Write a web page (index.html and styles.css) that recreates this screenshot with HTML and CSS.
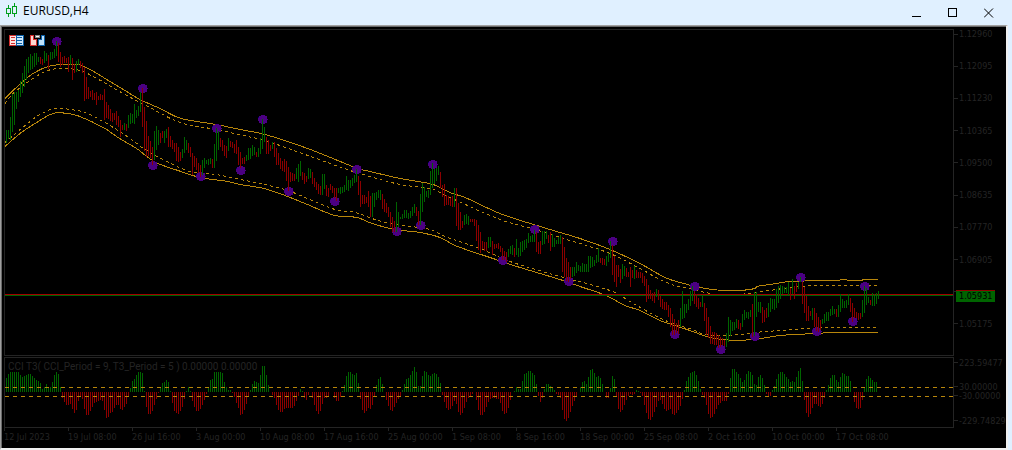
FILE: index.html
```html
<!DOCTYPE html>
<html lang="en">
<head>
<meta charset="utf-8">
<title>EURUSD,H4</title>
<link rel="stylesheet" href="styles.css">
</head>
<body>
<header class="titlebar">
  <svg class="logo" width="14" height="16" viewBox="0 0 14 16" aria-hidden="true">
    <path d="M2.5 2v3M2.5 11v3M.5 5.5h4v5h-4zM8.500 0v3M8.500 11v3M6.500 3.500h4v7h-4z"/>
  </svg>
  <h1 class="title">EURUSD,H4</h1>
  <div class="controls">
    <button class="control" aria-label="Minimize"><svg width="10" height="10" viewBox="0 0 10 10"><path d="M0 8.500h9"/></svg></button>
    <button class="control" aria-label="Maximize"><svg width="10" height="10" viewBox="0 0 10 10"><path d="M.5 .5h8v8h-8z"/></svg></button>
    <button class="control" aria-label="Close"><svg class="smooth" width="10" height="10" viewBox="0 0 10 10"><path d="M0 .5l9 9M9 .5l-9 9"/></svg></button>
  </div>
</header>
<main class="frame">
  <section class="pane price">
    <svg class="plot" id="price" viewBox="5 30 948 325" preserveAspectRatio="none" role="img" aria-label="EURUSD price chart">
      <g id="bands"></g>
      <g id="dots"></g>
      <path class="ask" d="M5 294.500H953"/>
      <path class="bid" d="M5 295.500H953"/>
      <path class="up" id="price-up"/>
      <path class="down" id="price-down"/>
    </svg>
    <div class="tools">
      <button class="tool" aria-label="Market depth">
        <svg width="15" height="11" viewBox="0 0 15 11"><path fill="#d32f2f" d="M0 0h8v11H0z"/><path fill="#0b5fa5" d="M7 0h8v11H7z"/><path fill="#ffe3df" d="M1 1h6v9H1z"/><path fill="#cfe8fb" d="M8 1h6v9H8z"/><path fill="#d32f2f" d="M2 2h4v1H2zM2 5h4v1H2zM2 8h4v1H2z"/><path fill="#0b5fa5" d="M8 2h5v1H8zM8 5h5v1H8zM8 8h5v1H8z"/></svg>
      </button>
      <button class="tool" aria-label="One click trading">
        <svg width="15" height="11" viewBox="0 0 15 11"><path fill="#d32f2f" d="M0 0h4v4h3v7H0z"/><path fill="#ffd6d0" d="M1 1h2v4h3v5H1z"/><path fill="#0b5fa5" d="M11 0h4v11H8V4h3z"/><path fill="#bfe2fb" d="M12 1h2v9H9V5h3z"/><path fill="#888" d="M5 0h5v3H5z"/><path fill="#fff" d="M6 1h3v1H6z"/></svg>
      </button>
    </div>
  </section>
  <div class="scale price-scale">
    <span>1.12960</span><span>1.12095</span><span>1.11230</span><span>1.10365</span><span>1.09500</span><span>1.08635</span><span>1.07770</span><span>1.06905</span><span></span><span>1.05175</span>
    <output class="tag">1.05931</output>
  </div>
  <section class="pane oscillator">
    <svg class="plot" viewBox="5 358 948 69" preserveAspectRatio="none" role="img" aria-label="CCI T3 histogram">
      <path class="up" id="osc-up"/>
      <path class="down" id="osc-down"/>
      <path class="level" d="M5 387.500H953M5 396.500H953"/>
    </svg>
    <p class="caption">CCI T3( CCI_Period = 9, T3_Period = 5 ) 0.00000 0.00000</p>
  </section>
  <div class="scale osc-scale">
    <span>223.59477</span><span>30.00000</span><span>-30.00000</span><span>-229.74829</span>
  </div>
  <div class="times">
    <span>12 Jul 2023</span><span>19 Jul 08:00</span><span>26 Jul 16:00</span><span>3 Aug 00:00</span><span>10 Aug 08:00</span><span>17 Aug 16:00</span><span>25 Aug 00:00</span><span>1 Sep 08:00</span><span>8 Sep 16:00</span><span>18 Sep 00:00</span><span>25 Sep 08:00</span><span>2 Oct 16:00</span><span>10 Oct 00:00</span><span>17 Oct 08:00</span>
  </div>
</main>
<script src="chart.js"></script>
</body>
</html>
```

FILE: styles.css
```css
* { box-sizing: border-box; }

body {
  margin: 0;
  height: 100vh;
  display: flex;
  flex-direction: column;
  background: #e0f0ff;
  font-family: "DejaVu Sans Condensed", "Liberation Sans", sans-serif;
}

.titlebar {
  display: flex;
  align-items: center;
  height: 25px;
  padding: 0 13px 0 6px;
}

.logo {
  margin-bottom: 4px;
  fill: none;
  stroke: #00a01c;
  shape-rendering: crispEdges;
}

.title {
  margin: 0 auto 3px 3px;
  font: 12px/16px "Open Sans", "Noto Sans", sans-serif;
  color: #000;
}

.controls { display: flex; gap: 16px; }

.control {
  display: grid;
  place-items: center;
  width: 20px;
  height: 20px;
  padding: 0;
  border: 0;
  background: none;
}

.control svg {
  fill: none;
  stroke: #000;
  shape-rendering: crispEdges;
}

.control .smooth { shape-rendering: auto; }

.frame {
  flex: 1;
  min-height: 0;
  display: grid;
  grid-template: minmax(0, 1fr) 71px 20px / minmax(0, 1fr) 52px;
  margin-right: 4px;
  padding: 2px 0 0 2px;
  background: #000;
  border: 1px solid #a0a0a0;
  border-right: 2px solid #f0f0f0;
  border-bottom: 2px solid #f0f0f0;
  box-shadow: inset 1px 1px #696969;
}

.pane {
  position: relative;
  min-height: 0;
  margin-left: 1px;
  border: 1px solid #242424;
}

.price { margin: 1px 0 1px 1px; }

.plot {
  display: block;
  width: 100%;
  height: 100%;
  fill: none;
  shape-rendering: crispEdges;
}

.up { fill: #006400; }
.down { fill: #8b0000; }
.ask { stroke: #a00000; }
.bid { stroke: #006400; }
.band, .level { stroke: #b8860b; }
.band.dashed { stroke-dasharray: 3 3; }
.level { stroke-dasharray: 4 4; }
.dot { fill: #4b0082; }
.dot-edge { fill: #00006e; }

.tools {
  position: absolute;
  top: 5px;
  left: 4px;
  display: flex;
  gap: 6px;
}

.tool {
  display: block;
  padding: 0;
  border: 0;
  background: none;
}

.tool svg { display: block; shape-rendering: crispEdges; }

.caption {
  position: absolute;
  top: 3px;
  left: 3px;
  margin: 0;
  font-family: Roboto, "Liberation Sans", sans-serif;
  font-size: 10px;
  line-height: 12px;
  white-space: nowrap;
  color: #242424;
}

.scale {
  position: relative;
  display: flex;
  flex-direction: column;
  justify-content: space-between;
  font-size: 9px;
  line-height: 12px;
  color: #242424;
}

.scale span {
  display: flex;
  align-items: center;
  gap: 1px;
  height: 12px;
  white-space: nowrap;
}

.scale span::before {
  content: "";
  width: 4px;
  height: 1px;
  background: #242424;
}

.price-scale { padding: 0 0 27px; }

.tag {
  position: absolute;
  top: calc(80% - 1px);
  left: 2px;
  width: 39px;
  padding-left: 3px;
  border-top: 1px solid #8b0000;
  line-height: 11px;
  color: #000;
  background: #006400;
}

.osc-scale { justify-content: flex-start; }
.osc-scale span { height: 9px; }
.osc-scale span:nth-child(1) { margin: 1px 0 15px; }
.osc-scale span:nth-child(4) { margin-top: 16px; }

.times {
  display: grid;
  grid-template-columns: repeat(14, 64fr) 54fr;
  margin-left: 1px;
  font-size: 9px;
  line-height: 12px;
  color: #242424;
}

.times span { min-width: 0; white-space: nowrap; }

.times span::before {
  content: "";
  display: block;
  width: 1px;
  height: 3px;
  background: #242424;
}
```

FILE: chart.js
```js
// Candle ranges, two units apart: direction, top, bottom.
const candles = `
u130,143 u130,139 u117,140 u94,132 u92,125 u92,109 u90,102 u81,97 u73,93 u66,87
u59,80 u57,73 u54,70 u56,69 u53,67 u53,65 u57,62 d57,64 d59,65 u51,63
u53,61 d55,69 u52,60 u52,59 u49,58 u41,56 d43,62 d52,67 d57,65 d56,63
d58,63 d57,72 u55,65 d58,80 d64,73 u61,72 u59,65 d61,68 d63,73 d67,101
d77,99 d87,99 d91,97 d90,100 d93,100 d92,105 d96,100 d94,100 d95,100 d89,120
d102,118 d105,119 d109,121 d113,122 d113,120 d111,125 d116,127 d120,137 d125,130 u123,130
d124,131 u115,128 u113,124 u114,123 u104,124 u110,118 u106,116 u92,112 d88,127 d107,151
d121,157 d136,156 d141,158 d147,165 u131,160 u126,150 u130,145 d133,143 d131,138 u131,143
u129,138 d127,147 d136,147 d140,149 d143,152 d143,161 d147,162 d152,161 u149,158 u137,153
u140,150 d143,153 d147,157 d153,175 d156,167 d158,170 d163,173 d165,177 u160,175 u158,168
u160,164 u159,165 u158,164 d159,168 u144,168 u128,161 u131,150 d138,147 d140,151 d145,156
d146,158 u138,151 d141,147 d142,148 d144,153 d140,154 d147,165 d152,168 d158,164 d157,164
u155,161 u148,160 u148,159 u145,156 u147,155 d152,157 u148,157 u138,154 u119,149 u127,142
d137,154 d140,154 d145,151 u142,149 d142,157 d148,165 d153,165 d158,169 d161,171 d159,172
d161,181 d167,191 d172,182 d173,181 d174,181 u168,179 u164,182 u161,176 d172,180 d173,184
d176,182 u168,179 u169,178 d172,184 d178,187 d182,190 d184,194 d186,195 u174,195 u174,189
d185,196 d188,197 d184,190 d186,193 d188,198 d188,201 u188,193 u187,194 u187,193 u185,192
u176,190 u180,191 u180,188 u178,186 u175,183 u169,182 d176,195 d181,207 d195,204 d195,204
d197,203 d191,207 d196,217 u193,217 u193,207 u192,200 u190,198 u190,200 d194,209 d199,212
d203,213 d207,217 d212,227 d217,232 d221,232 u202,232 u212,227 u217,219 u214,219 u210,218
u210,218 u213,219 u211,218 u207,216 u204,213 d207,216 d211,225 u194,225 u183,212 u187,202
u191,197 u190,198 u171,195 u163,188 u169,184 u168,181 u166,175 d172,188 d185,197 d184,206
d195,205 d196,205 d198,206 d196,207 u188,207 d188,226 d203,230 d212,230 d221,228 u215,225
u214,224 u216,225 d219,222 d219,222 d219,226 d220,241 d225,250 d232,253 d241,249 d242,251
d242,251 u237,248 u237,247 d241,255 d244,249 d244,248 d243,249 d246,252 d248,260 d251,260
d252,262 u249,257 u246,254 u245,255 d248,257 u239,255 u248,257 u242,256 u241,252 u240,250
u239,248 u233,243 u236,242 u235,242 u230,242 d232,252 d242,254 d241,254 u231,245 u231,244
u231,239 d235,243 d232,251 u234,247 u238,247 u240,244 u237,244 u235,244 d237,272 d247,277
d258,281 d262,282 d267,279 u267,277 u267,276 u262,273 u265,271 u266,272 u263,272 u264,272
u264,272 u256,272 u256,268 u257,267 u260,266 u255,263 u248,262 d258,263 d258,265 d259,265
u256,266 u253,262 u241,258 d245,275 d256,282 d265,287 d265,277 d269,283 u264,279 u266,276
d268,277 d272,277 d267,287 d270,278 u266,279 d270,278 d272,278 d272,278 d273,283 d276,286
d279,302 d285,299 d290,299 d293,301 d292,303 u289,297 d290,300 d296,307 d299,309 d302,310
d302,310 d305,317 d308,327 d314,335 d319,335 d323,333 d320,334 u308,327 u291,319 u304,318
u304,313 u299,310 u291,306 u286,301 d291,304 d294,307 d298,309 d302,307 u296,307 d303,321
d308,335 d317,338 d326,344 d332,344 d332,345 d333,345 d335,348 d337,347 d338,345 d340,346
u333,347 u317,342 u320,336 u322,331 u322,330 u319,328 d320,329 d323,330 u314,327 u310,320
u312,318 u312,319 u310,317 d304,337 u292,336 u292,317 u302,312 u302,313 d307,323 d310,322
d308,318 u303,317 u298,312 u299,309 u299,310 u289,308 u286,303 u285,299 u286,294 u287,293
u287,293 u282,295 d288,300 u279,294 d286,299 d283,292 u282,289 u277,282 d282,304 d287,313
d296,321 d306,321 d311,316 u308,320 d308,327 d313,331 d317,332 d320,330 u319,324 u314,323
u312,321 u312,321 u309,316 u306,315 u309,314 d309,317 u305,317 u294,312 u299,308 u301,308
u300,308 u294,305 d298,312 d303,322 d308,318 d312,318 d313,320 d313,319 u300,317 u286,313
u288,305 u297,303 d300,305 u293,306 u294,306 u293,304 u291,299`;

// Histogram heights: positive rises above the zero line, negative hangs below.
const histogram = `
14 18 20 20 20 20 20 17 15 16 17 18 18 16 14 12 11 9 3 5 8 4 5 10 17 20 18 5 -6 -10
-13 -13 -12 -17 -21 -18 -9 -4 -7 -17 -23 -23 -19 -15 -11 -10 -9 -8 -9 -18 -26 -25 -21 -20 -16 -13 -13 -17 -18 -15
-12 -4 4 11 13 17 20 20 19 1 -15 -22 -22 -19 -13 -7 -1 5 9 10 12 10 1 -11 -19 -21 -22 -19 -15 -7
1 5 1 -9 -15 -19 -19 -17 -13 -8 -2 4 12 13 20 20 20 20 19 10 5 2 2 -1 -5 -11 -16 -23 -22 -18
-12 -4 2 8 11 10 9 17 26 26 17 7 0 -3 -6 -13 -18 -20 -20 -17 -16 -16 -16 -16 -14 -9 -4 3 1 -6
-8 -3 0 -6 -13 -19 -22 -19 -12 -6 -6 -4 0 0 -6 -9 -9 -5 1 7 16 20 20 18 17 19 9 -7 -18 -21
-19 -16 -17 -13 -4 7 13 15 8 0 -8 -14 -18 -19 -15 -11 -7 -4 2 8 13 14 17 21 25 20 6 6 16 21
20 17 16 18 19 18 15 9 -3 -10 -16 -18 -17 -14 -9 -12 -20 -23 -21 -16 -10 -6 -4 -2 0 -8 -18 -23 -23 -20
-15 -10 -7 -6 -6 -7 -7 -11 -19 -22 -21 -16 -8 0 1 5 3 3 11 18 19 21 21 19 17 8 -4 -10 -6 3
8 8 6 5 2 -2 -3 -6 -18 -27 -29 -26 -20 -14 -9 -4 0 5 10 11 8 15 22 23 19 15 16 14 8 0
-6 -6 4 16 13 -4 -17 -20 -18 -13 -8 -4 -2 -3 -2 2 1 -1 -4 -13 -21 -27 -28 -25 -20 -15 -9 -8 -12 -17
-19 -18 -17 -22 -23 -21 -18 -14 -7 2 11 15 19 20 21 17 11 3 -3 -6 -13 -22 -26 -25 -22 -17 -13 -11 -9 -9
-9 -2 14 23 23 20 18 14 10 12 18 21 20 17 8 7 15 17 14 7 -2 -4 -4 2 6 13 18 20 20 18
15 13 10 11 10 15 21 24 11 -8 -21 -25 -22 -16 -12 -12 -14 -15 -12 -6 2 7 14 17 17 12 10 15 19 18
16 16 11 0 -10 -16 -17 -16 -8 4 13 16 14 12 10 10`;

const bands = [
  ['', '5,98 12,91 22,82 33,73 48,66 62,64 78,64 90,69 110,81 125,90 140,99 160,108 178,117 197,121 216,124 240,129 265,134 305,147 350,165 357,168 370,171 400,178 433,184 450,192 465,197 500,213 540,226 560,232 580,238 610,249 640,263 665,277 680,282 700,287 712,289 726,290 740,290 755,288 757,286 770,284 790,281 838,280 842,279 852,280 862,280 863,279 878,279'],
  ['dashed', '5,103 12,94 30,80 48,70 65,68 80,70 95,77 125,94 150,107 180,122 216,129 248,136 265,140 305,154 350,170 370,176 400,184 433,189 450,197 500,219 535,229 560,237 580,243 610,253 640,268 660,279 675,285 690,288 705,292 726,295 755,292 770,290 790,287 815,285 878,285'],
  ['', '5,146 20,133 35,123 53,113 68,113 80,116 105,128 118,137 138,149 148,157 158,163 178,170 200,177 228,181 240,184 264,188 285,195 305,203 335,215 357,217 372,223 395,229 420,232 440,237 455,245 490,257 520,267 560,279 580,286 606,295 625,305 640,310 660,320 690,330 710,337 735,340 760,338 780,335 815,333 835,332 878,332'],
  ['dashed', '5,142 12,136 25,125 40,114 55,108 70,109 85,112 110,125 130,138 145,149 165,160 190,171 216,174 250,181 285,189 305,197 335,209 355,212 375,219 395,224 430,229 445,236 480,248 510,261 560,276 590,284 615,292 630,301 655,315 675,324 690,328 705,334 726,335 740,334 755,332 780,330 810,328 840,327 878,327']
];

const swings = [
  [57, 41], [143, 88], [153, 165], [201, 176], [217, 128], [241, 170], [263, 119],
  [289, 191], [335, 201], [357, 169], [397, 231], [421, 225], [433, 164], [503, 260],
  [535, 229], [569, 281], [613, 241], [675, 334], [695, 286], [721, 349], [755, 336],
  [801, 277], [817, 331], [853, 321], [865, 286]
];

const FIRST_X = 6;
const STEP = 2;
const ZERO = 392;
const bar = (x, top, bottom) => `M${x} ${top}h1V${bottom}h-1z`;
const setPath = (id, parts) => document.getElementById(id).setAttribute('d', parts.join(''));

const price = { u: [], d: [] };
candles.trim().split(/\s+/).forEach((entry, i) => {
  const [top, bottom] = entry.slice(1).split(',');
  price[entry[0]].push(bar(FIRST_X + i * STEP, top, bottom));
});
setPath('price-up', price.u);
setPath('price-down', price.d);

const rises = [];
const falls = [];
histogram.trim().split(/\s+/).map(Number).forEach((value, i) => {
  if (value) (value > 0 ? rises : falls).push(bar(FIRST_X + i * STEP, ZERO - value, ZERO));
});
setPath('osc-up', rises);
setPath('osc-down', falls);

// Cubic Hermite curve through the points; slopes are averaged between neighbours.
function curve(text) {
  const p = text.split(' ').map(pair => pair.split(',').map(Number));
  const slope = p.map((_, i) => {
    const a = p[Math.max(i - 1, 0)];
    const b = p[Math.min(i + 1, p.length - 1)];
    return (b[1] - a[1]) / (b[0] - a[0]);
  });
  let d = `M${p[0]}`;
  for (let i = 1; i < p.length; i++) {
    const [x0, y0] = p[i - 1];
    const [x1, y1] = p[i];
    const third = (x1 - x0) / 3;
    d += `C${x0 + third} ${y0 + slope[i - 1] * third} ${x1 - third} ${y1 - slope[i] * third} ${x1} ${y1}`;
  }
  return d;
}

document.getElementById('bands').innerHTML = bands
  .map(([style, points]) => `<path class="band ${style}" transform="translate(0 0.5)" d="${curve(points)}"/>`)
  .join('');

document.getElementById('dots').innerHTML = swings
  .map(([x, y]) => `<circle class="dot-edge" cx="${x - 0.5}" cy="${y + 0.5}" r="4.500"/><circle class="dot" cx="${x}" cy="${y + 0.5}" r="4.700"/>`)
  .join('');
```
